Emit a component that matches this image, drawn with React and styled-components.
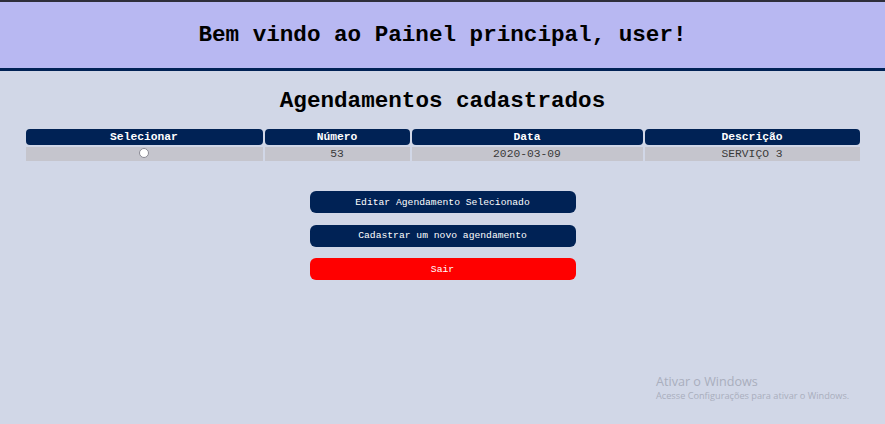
import React from "react";
import styled, { createGlobalStyle } from "styled-components";

const GlobalStyle = createGlobalStyle`
  html, body { margin: 0; padding: 0; }
  body {
    background: #d1d7e7;
    font-family: "Liberation Mono", "Courier New", monospace;
    min-height: 424px;
  }
`;

const Page = styled.div`
  position: relative;
  min-height: 424px;
  display: flex;
  flex-direction: column;
`;

const Header = styled.header`
  height: 66px;
  background: #b8b8f2;
  border-top: 2px solid #2e2e3a;
  border-bottom: 3px solid #002255;
  display: flex;
  align-items: center;
  justify-content: center;
`;

const HeaderTitle = styled.h1`
  margin: 0;
  font-size: 22.6px;
  font-weight: bold;
  color: #000;
  line-height: 1;
`;

const Main = styled.main`
  display: flex;
  flex-direction: column;
  align-items: center;
  padding-top: 18px;
`;

const SectionTitle = styled.h2`
  margin: 0;
  font-size: 22.6px;
  font-weight: bold;
  color: #000;
  line-height: 24px;
`;

const Table = styled.table`
  margin-top: 14px;
  width: 838px;
  border-spacing: 2px;
  table-layout: fixed;
`;

const Th = styled.th`
  background: #002255;
  color: #fff;
  font-size: 11.3px;
  font-weight: bold;
  height: 16px;
  padding: 0;
  border-radius: 4px;
  text-align: center;
  line-height: 16px;
`;

const Td = styled.td`
  background: #c5c5cd;
  color: #3a3a3a;
  font-size: 11.3px;
  height: 14px;
  padding: 0;
  text-align: center;
  line-height: 14px;
`;

const Radio = styled.span`
  display: inline-block;
  width: 8px;
  height: 8px;
  border-radius: 50%;
  background: #fff;
  border: 1px solid #8a8a94;
  vertical-align: middle;
  position: relative;
  top: -1px;
`;

const Actions = styled.div`
  margin-top: 28px;
  display: flex;
  flex-direction: column;
  gap: 11.5px;
  width: 266px;
`;

const Button = styled.button`
  height: 22px;
  width: 100%;
  border: none;
  border-radius: 6px;
  background: ${(p) => (p.$danger ? "#ff0000" : "#002255")};
  color: #fff;
  font-family: "Liberation Mono", "Courier New", monospace;
  font-size: 9.7px;
  padding: 0;
  cursor: pointer;
`;

const Watermark = styled.div`
  position: absolute;
  left: 656px;
  top: 374px;
  font-family: "Open Sans", "Noto Sans", sans-serif;
  color: #a9aebd;
  line-height: 1.2;
`;

const WmTitle = styled.div`
  font-size: 12.6px;
`;

const WmSub = styled.div`
  font-size: 9.2px;
  margin-top: 1px;
`;

const cols = [
  { label: "Selecionar", w: 237 },
  { label: "Número", w: 145 },
  { label: "Data", w: 231 },
  { label: "Descrição", w: 215 },
];

export default function App() {
  return (
    <>
      <GlobalStyle />
      <Page>
        <Header>
          <HeaderTitle>Bem vindo ao Painel principal, user!</HeaderTitle>
        </Header>
        <Main>
          <SectionTitle>Agendamentos cadastrados</SectionTitle>
          <Table>
            <colgroup>
              {cols.map((c) => (
                <col key={c.label} style={{ width: c.w }} />
              ))}
            </colgroup>
            <thead>
              <tr>
                {cols.map((c) => (
                  <Th key={c.label}>{c.label}</Th>
                ))}
              </tr>
            </thead>
            <tbody>
              <tr>
                <Td>
                  <Radio />
                </Td>
                <Td>53</Td>
                <Td>2020-03-09</Td>
                <Td>SERVIÇO 3</Td>
              </tr>
            </tbody>
          </Table>
          <Actions>
            <Button>Editar Agendamento Selecionado</Button>
            <Button>Cadastrar um novo agendamento</Button>
            <Button $danger>Sair</Button>
          </Actions>
        </Main>
        <Watermark>
          <WmTitle>Ativar o Windows</WmTitle>
          <WmSub>Acesse Configurações para ativar o Windows.</WmSub>
        </Watermark>
      </Page>
    </>
  );
}
